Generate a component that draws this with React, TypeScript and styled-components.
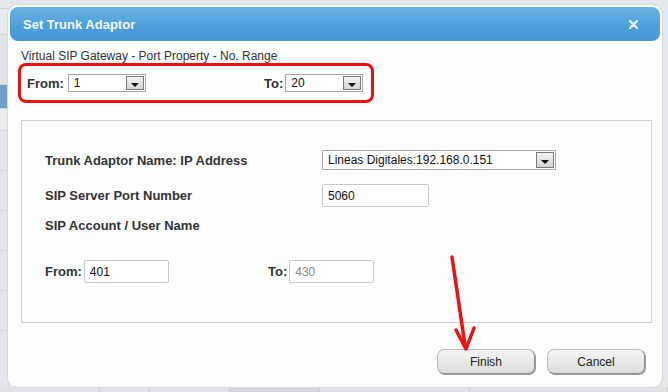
import styled, { createGlobalStyle } from "styled-components";

const GlobalStyle = createGlobalStyle`
  * {
    box-sizing: border-box;
  }
  html, body {
    margin: 0;
    padding: 0;
    background: #dfe4ea;
    font-family: "Liberation Sans", Arial, sans-serif;
  }
`;

const Page = styled.div`
  position: relative;
  width: 668px;
  height: 392px;
  overflow: hidden;
  background: #e4e8ec;
`;

const SideStrip = styled.div`
  position: absolute;
  left: 0;
  top: 0;
  width: 9px;
  height: 392px;
  display: flex;
  flex-direction: column;
  background: #dfe4e9;
`;

const SideCell = styled.div<{ $h: number; $bg: string }>`
  flex-shrink: 0;
  height: ${(p) => p.$h}px;
  background: ${(p) => p.$bg};
  border-bottom: 1px solid #cfd5dc;
`;

const BottomStrip = styled.div`
  position: absolute;
  left: 0;
  bottom: 0;
  width: 668px;
  height: 5px;
  display: flex;
  background: #d9dee4;
`;

const BottomCell = styled.div<{ $w: number; $bg: string }>`
  width: ${(p) => p.$w}px;
  background: ${(p) => p.$bg};
  border-right: 1px solid #c9ced5;
`;

const Dialog = styled.div`
  position: absolute;
  left: 8px;
  top: 5px;
  width: 654px;
  height: 382px;
  padding: 2px;
  border-radius: 9px;
  background: #fcfdfd;
  box-shadow: 0 0 0 1px #d3d9df;
  display: flex;
  flex-direction: column;
`;

const TitleBar = styled.div`
  flex-shrink: 0;
  height: 34px;
  border-radius: 8px;
  background: linear-gradient(#6ab4e6, #4d9fdb 55%, #4799d6);
  display: flex;
  align-items: center;
  justify-content: space-between;
  padding: 0 22px 0 13px;
  color: #f4f9fd;
  font-size: 13px;
  font-weight: bold;
`;

const Body = styled.div`
  flex: 1;
  display: flex;
  flex-direction: column;
  padding: 0 8px 0 11px;
`;

const Subtitle = styled.div`
  margin-top: 8px;
  font-size: 12px;
  color: #333;
  line-height: 14px;
`;

const RangeBox = styled.div`
  margin-left: -3px;
  width: 356px;
  height: 40px;
  border: 3px solid #ee1111;
  border-radius: 8px;
  display: flex;
  align-items: center;
  padding-left: 6px;
`;

const Group = styled.div<{ $w?: number }>`
  display: flex;
  align-items: center;
  width: ${(p) => (p.$w ? `${p.$w}px` : "auto")};
`;

const Label = styled.span<{ $gap?: number }>`
  font-size: 13px;
  font-weight: bold;
  color: #333;
  margin-right: ${(p) => p.$gap ?? 4}px;
`;

const SelectBox = styled.div<{ $w: number; $h: number }>`
  width: ${(p) => p.$w}px;
  height: ${(p) => p.$h}px;
  border: 1px solid #a9a9a9;
  background: #fff;
  display: flex;
  align-items: center;
  font-size: 12px;
  color: #111;
  padding-left: 5px;
`;

const SelectText = styled.span`
  flex: 1;
`;

const ArrowButton = styled.span`
  width: 18px;
  height: calc(100% - 2px);
  margin-right: 1px;
  border: 1px solid #7a7a7a;
  background: linear-gradient(#f2f2f2, #d6d6d6);
  display: flex;
  align-items: center;
  justify-content: center;
`;

const Caret = styled.span`
  width: 0;
  height: 0;
  border-left: 4px solid transparent;
  border-right: 4px solid transparent;
  border-top: 4px solid #111;
  margin-top: 3px;
`;

const Panel = styled.div`
  margin-top: 17px;
  height: 203px;
  border: 1px solid #cfcfcf;
  display: flex;
  flex-direction: column;
  padding: 29px 0 0 23px;
`;

const FieldRow = styled.div<{ $mt?: number }>`
  display: flex;
  align-items: center;
  margin-top: ${(p) => p.$mt ?? 0}px;
`;

const FieldLabel = styled.div`
  width: 277px;
  font-size: 13px;
  font-weight: bold;
  color: #333;
  line-height: 15px;
`;

const TextBox = styled.input<{ $w: number; $muted?: boolean }>`
  width: ${(p) => p.$w}px;
  height: 23px;
  border: 1px solid #c8c8c8;
  border-radius: 2px;
  background: #fff;
  padding: 0 5px;
  font-family: "Liberation Sans", Arial, sans-serif;
  font-size: 12px;
  color: ${(p) => (p.$muted ? "#888" : "#111")};
  outline: none;
`;

const Footer = styled.div`
  display: flex;
  justify-content: flex-end;
  gap: 12px;
  margin-top: 26px;
  padding-right: 7px;
`;

const Button = styled.button`
  width: 98px;
  height: 25px;
  border: 1px solid #8d8d8d;
  border-top-color: #bdbdbd;
  border-left-color: #bdbdbd;
  border-radius: 7px;
  background: linear-gradient(#f5f5f5, #dcdcdc);
  box-shadow: 1px 1px 0 #9a9a9a;
  font-family: "Liberation Sans", Arial, sans-serif;
  font-size: 12px;
  color: #222;
`;

const Annotation = styled.svg`
  position: absolute;
  left: 0;
  top: 0;
  pointer-events: none;
`;

function Select({ w, h, value }: { w: number; h: number; value: string }) {
  return (
    <SelectBox $w={w} $h={h}>
      <SelectText>{value}</SelectText>
      <ArrowButton>
        <Caret />
      </ArrowButton>
    </SelectBox>
  );
}

export default function App() {
  return (
    <Page>
      <GlobalStyle />
      <SideStrip>
        <SideCell $h={9} $bg="#e4e8ec" />
        <SideCell $h={26} $bg="#e8ebee" />
        <SideCell $h={50} $bg="#dfe4e9" />
        <SideCell $h={24} $bg="#6f9fc8" />
        <SideCell $h={22} $bg="#e9edf0" />
        <SideCell $h={40} $bg="#e3e7eb" />
        <SideCell $h={40} $bg="#e3e7eb" />
        <SideCell $h={40} $bg="#e3e7eb" />
        <SideCell $h={40} $bg="#e3e7eb" />
        <SideCell $h={40} $bg="#e3e7eb" />
        <SideCell $h={60} $bg="#e3e7eb" />
      </SideStrip>
      <BottomStrip>
        <BottomCell $w={100} $bg="#e1e5ea" />
        <BottomCell $w={50} $bg="#e1e5ea" />
        <BottomCell $w={80} $bg="#e1e5ea" />
        <BottomCell $w={90} $bg="#d3d8de" />
        <BottomCell $w={150} $bg="#dde2e7" />
        <BottomCell $w={198} $bg="#dde2e7" />
      </BottomStrip>

      <Dialog>
        <TitleBar>
          <span>Set Trunk Adaptor</span>
          <svg width="9" height="9" viewBox="0 0 9 9">
            <path d="M1 1 L8 8 M8 1 L1 8" stroke="#e8f3fb" strokeWidth="2.4" strokeLinecap="round" />
          </svg>
        </TitleBar>
        <Body>
          <Subtitle>Virtual SIP Gateway - Port Property - No. Range</Subtitle>
          <RangeBox>
            <Group $w={237}>
              <Label>From:</Label>
              <Select w={78} h={18} value="1" />
            </Group>
            <Group>
              <Label $gap={2}>To:</Label>
              <Select w={78} h={18} value="20" />
            </Group>
          </RangeBox>

          <Panel>
            <FieldRow>
              <FieldLabel>Trunk Adaptor Name: IP Address</FieldLabel>
              <Select w={234} h={20} value="Lineas Digitales:192.168.0.151" />
            </FieldRow>
            <FieldRow $mt={14}>
              <FieldLabel>SIP Server Port Number</FieldLabel>
              <TextBox $w={107} defaultValue="5060" readOnly />
            </FieldRow>
            <FieldRow $mt={11}>
              <FieldLabel>SIP Account / User Name</FieldLabel>
            </FieldRow>
            <FieldRow $mt={27}>
              <Group $w={223}>
                <Label $gap={2}>From:</Label>
                <TextBox $w={85} defaultValue="401" readOnly />
              </Group>
              <Group>
                <Label $gap={2}>To:</Label>
                <TextBox $w={85} defaultValue="430" $muted readOnly />
              </Group>
            </FieldRow>
          </Panel>

          <Footer>
            <Button>Finish</Button>
            <Button>Cancel</Button>
          </Footer>
        </Body>
      </Dialog>

      <Annotation width="668" height="392" viewBox="0 0 668 392">
        <path d="M452 257 L465 345" stroke="#ee1111" strokeWidth="3.5" strokeLinecap="round" fill="none" />
        <path d="M456 330 L466 349 L474 328" stroke="#ee1111" strokeWidth="3.5" strokeLinecap="round" strokeLinejoin="round" fill="none" />
      </Annotation>
    </Page>
  );
}
